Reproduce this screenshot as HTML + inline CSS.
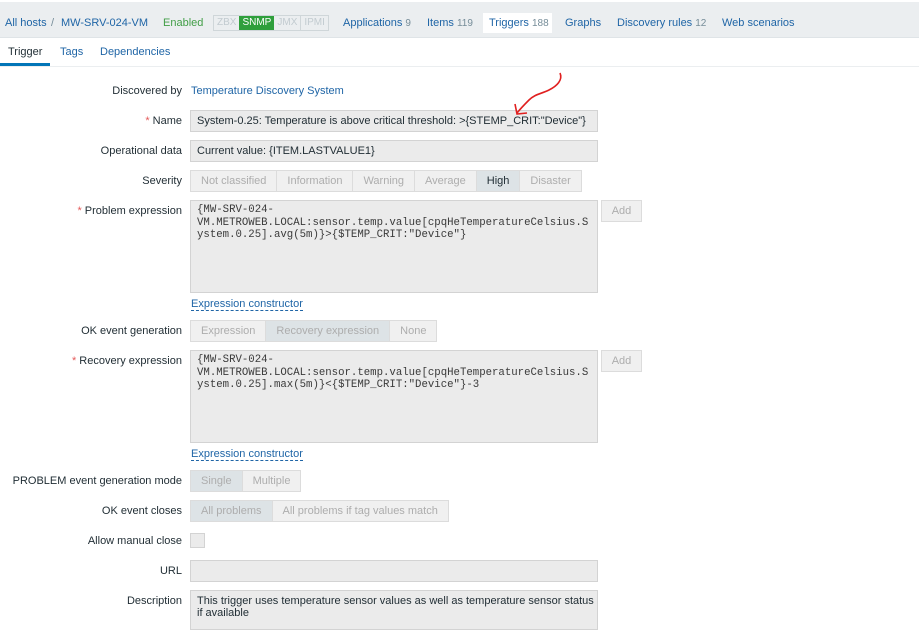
<!DOCTYPE html>
<html><head><style>
*{margin:0;padding:0;box-sizing:border-box}
body{width:919px;height:624px;overflow:hidden;background:#fff;font-family:"Liberation Sans",Arial,sans-serif;font-size:11px;color:#1f2c33;position:relative}
.a{position:absolute;white-space:nowrap}
.nav{position:absolute;left:0;top:2px;width:919px;height:36px;background:#ebeef0;border-bottom:1px solid #dfe4e7}
.lnk{color:#1f65a6}
.cnt{color:#768d99;font-size:10px}
.lbl{position:absolute;right:737px;white-space:nowrap;text-align:right}
.inp{position:absolute;left:190px;width:408px;height:22px;background:#ebebeb;border:1px solid #d3d3d3;padding:4px 6px;white-space:nowrap}
.ta{position:absolute;left:190px;width:408px;height:93px;background:#ebebeb;border:1px solid #d3d3d3;padding:3px 6px;font-family:"Liberation Mono",monospace;font-size:10.7px;line-height:12.5px;color:#3a3a3a;white-space:pre}
.seg{position:absolute;height:22px;display:flex;border:1px solid #dcdcdc;background:#f0f0f0}
.seg div{padding:0 10px;line-height:20px;color:#adadad;border-right:1px solid #dcdcdc}
.seg div:last-child{border-right:none}
.seg .on{background:#dde3e6;color:#1f2c33}
.seg .ong{background:#dde3e6;color:#adadad}
.req{color:#e45959}
.ec{position:absolute;left:191px;color:#1f65a6;border-bottom:1px dashed #1f65a6;line-height:12px}
.btn{position:absolute;left:601px;width:41px;height:22px;border:1px solid #dcdcdc;background:#f0f0f0;color:#adadad;text-align:center;line-height:20px}
</style></head><body>
<div class="nav"></div>
<div class="a lnk" style="left:5px;top:17px">All hosts</div>
<div class="a" style="left:51px;top:17px;color:#768d99">/</div>
<div class="a lnk" style="left:61px;top:17px">MW-SRV-024-VM</div>
<div class="a" style="left:163px;top:17px;color:#429e47">Enabled</div>
<div class="a" style="left:213px;top:15px;height:16px;border:1px solid #cfd6d9;display:flex;font-size:10px;line-height:14px;color:#c2cbd0">
<span style="padding:0 3px">ZBX</span><span style="padding:0 3px;background:#2f9f3c;color:#fff">SNMP</span><span style="padding:0 3px;border-right:1px solid #cfd6d9">JMX</span><span style="padding:0 3px">IPMI</span></div>
<div class="a lnk" style="left:343px;top:17px">Applications <span class="cnt">9</span></div>
<div class="a lnk" style="left:427px;top:17px">Items <span class="cnt">119</span></div>
<div class="a" style="left:483px;top:13px;width:69px;height:20px;background:#fff"></div>
<div class="a lnk" style="left:489px;top:17px">Triggers <span class="cnt">188</span></div>
<div class="a lnk" style="left:565px;top:17px">Graphs</div>
<div class="a lnk" style="left:617px;top:17px">Discovery rules <span class="cnt">12</span></div>
<div class="a lnk" style="left:722px;top:17px">Web scenarios</div>

<div class="a" style="left:8px;top:46px">Trigger</div>
<div class="a lnk" style="left:60px;top:46px">Tags</div>
<div class="a lnk" style="left:100px;top:46px">Dependencies</div>
<div class="a" style="left:0;top:63px;width:50px;height:3px;background:#0275b8"></div>
<div class="a" style="left:0;top:66px;width:919px;height:1px;background:#ebeef0"></div>

<div class="lbl" style="top:85px">Discovered by</div>
<div class="a lnk" style="left:191px;top:85px">Temperature Discovery System</div>
<div class="lbl" style="top:115px"><span class="req">*</span> Name</div>
<div class="inp" style="top:110px">System-0.25: Temperature is above critical threshold: &gt;{STEMP_CRIT:"Device"}</div>
<div class="lbl" style="top:145px">Operational data</div>
<div class="inp" style="top:140px">Current value: {ITEM.LASTVALUE1}</div>
<div class="lbl" style="top:175px">Severity</div>
<div class="seg" style="left:190px;top:170px"><div>Not classified</div><div>Information</div><div>Warning</div><div>Average</div><div class="on">High</div><div>Disaster</div></div>
<div class="lbl" style="top:205px"><span class="req">*</span> Problem expression</div>
<div class="ta" style="top:200px">{MW-SRV-024-
VM.METROWEB.LOCAL:sensor.temp.value[cpqHeTemperatureCelsius.S
ystem.0.25].avg(5m)}&gt;{$TEMP_CRIT:"Device"}</div>
<div class="btn" style="top:200px">Add</div>
<div class="ec" style="top:298px">Expression constructor</div>
<div class="lbl" style="top:325px">OK event generation</div>
<div class="seg" style="left:190px;top:320px"><div>Expression</div><div class="ong">Recovery expression</div><div>None</div></div>
<div class="lbl" style="top:355px"><span class="req">*</span> Recovery expression</div>
<div class="ta" style="top:350px">{MW-SRV-024-
VM.METROWEB.LOCAL:sensor.temp.value[cpqHeTemperatureCelsius.S
ystem.0.25].max(5m)}&lt;{$TEMP_CRIT:"Device"}-3</div>
<div class="btn" style="top:350px">Add</div>
<div class="ec" style="top:448px">Expression constructor</div>
<div class="lbl" style="top:475px">PROBLEM event generation mode</div>
<div class="seg" style="left:190px;top:470px"><div class="ong">Single</div><div>Multiple</div></div>
<div class="lbl" style="top:505px">OK event closes</div>
<div class="seg" style="left:190px;top:500px"><div class="ong">All problems</div><div>All problems if tag values match</div></div>
<div class="lbl" style="top:535px">Allow manual close</div>
<div class="a" style="left:190px;top:533px;width:15px;height:15px;border:1px solid #d3d3d3;background:#ebebeb"></div>
<div class="lbl" style="top:565px">URL</div>
<div class="inp" style="top:560px"></div>
<div class="lbl" style="top:595px">Description</div>
<div class="inp" style="top:590px;height:40px;white-space:normal;line-height:12px;padding:4px 2px 4px 6px">This trigger uses temperature sensor values as well as temperature sensor status<br>if available</div>

<svg class="a" style="left:505px;top:70px" width="70" height="50"><path d="M55 3 C58 10 52 16 44 20 C36 24 30 24 24 30 C20 34 16 38 12 43 M10 34 L12 44 L22 43" fill="none" stroke="#e02020" stroke-width="1.6"/></svg>
</body></html>
